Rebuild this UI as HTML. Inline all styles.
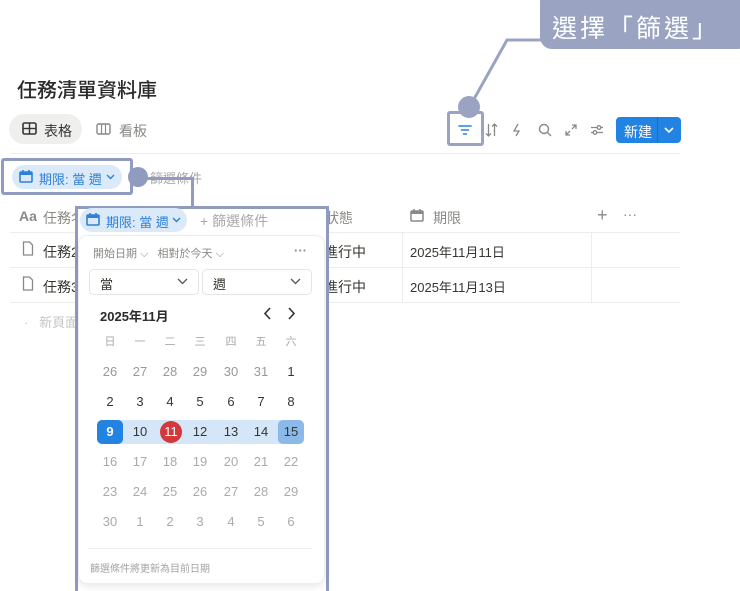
<!DOCTYPE html>
<html><head><meta charset="utf-8"><style>
*{margin:0;padding:0;box-sizing:border-box}
body{width:740px;height:591px;background:#fff;position:relative;overflow:hidden;font-family:"Liberation Sans","Noto Sans CJK TC",sans-serif;color:#37352f}
.a{position:absolute}
.t{white-space:nowrap}
.g{color:#8a8985}
.cal span{position:absolute;width:24px;text-align:center;font-size:13px;line-height:24px}
</style></head><body>

<div class="a t" style="left:17px;top:74px;font-size:20px;font-weight:500;color:#2b2b2b">任務清單資料庫</div>

<!-- tabs -->
<div class="a" style="left:9px;top:114px;width:73px;height:30px;border-radius:15px;background:#efefed"></div>
<svg class="a" style="left:22px;top:122px" width="15" height="13" viewBox="0 0 15 13"><rect x="1" y="1" width="13" height="11" rx="1.5" fill="none" stroke="#37352f" stroke-width="1.6"/><line x1="1" y1="6.5" x2="14" y2="6.5" stroke="#37352f" stroke-width="1.4"/><line x1="7.5" y1="1" x2="7.5" y2="12" stroke="#37352f" stroke-width="1.4"/></svg>
<div class="a t" style="left:44px;top:121px;font-size:14px">表格</div>
<svg class="a" style="left:96px;top:123px" width="15" height="12" viewBox="0 0 15 12"><rect x="1" y="1" width="13" height="10" rx="1.5" fill="none" stroke="#8a8985" stroke-width="1.4"/><line x1="5.5" y1="1" x2="5.5" y2="11" stroke="#8a8985" stroke-width="1.2"/><line x1="9.5" y1="1" x2="9.5" y2="11" stroke="#8a8985" stroke-width="1.2"/></svg>
<div class="a t g" style="left:119px;top:121px;font-size:14px">看板</div>

<!-- toolbar icons -->
<svg class="a" style="left:458px;top:124px" width="14" height="12"><g stroke="#2f80d8" stroke-width="1.6" stroke-linecap="round"><line x1="1" y1="2" x2="13" y2="2"/><line x1="3.5" y1="6" x2="10.5" y2="6"/><line x1="5.5" y1="10" x2="8.5" y2="10"/></g></svg>
<svg class="a" style="left:485px;top:123px" width="13" height="14" fill="none" stroke="#8a8985" stroke-width="1.3"><path d="M3.5 1v12M1 10.5l2.5 2.5 2.5-2.5M9.5 13V1M7 3.5L9.5 1 12 3.5"/></svg>
<svg class="a" style="left:512px;top:123px" width="10" height="14" fill="none" stroke="#8a8985" stroke-width="1.3"><path d="M6 1L2 8h5l-3 5"/></svg>
<svg class="a" style="left:538px;top:123px" width="14" height="14"><circle cx="6" cy="6" r="4.5" fill="none" stroke="#8a8985" stroke-width="1.4"/><line x1="9.5" y1="9.5" x2="13" y2="13" stroke="#8a8985" stroke-width="1.4"/></svg>
<svg class="a" style="left:565px;top:124px" width="12" height="12" fill="none" stroke="#8a8985" stroke-width="1.3"><path d="M1 11L5 7M1 7v4h4M11 1L7 5M7 1h4v4"/></svg>
<svg class="a" style="left:590px;top:124px" width="14" height="12" fill="none" stroke="#8a8985" stroke-width="1.3"><path d="M1 3.5h12M1 8.5h12"/><circle cx="9" cy="3.5" r="1.8" fill="#fff"/><circle cx="5" cy="8.5" r="1.8" fill="#fff"/></svg>
<div class="a" style="left:616px;top:117px;width:65px;height:26px;border-radius:4px;background:#2383e2"></div>
<div class="a t" style="left:624px;top:122px;color:#fff;font-size:14px">新建</div>
<div class="a" style="left:657px;top:117px;width:1px;height:26px;background:#1a6fc5"></div>
<svg class="a" style="left:664px;top:126px" width="10" height="8"><path d="M1 2l4 4 4-4" fill="none" stroke="#fff" stroke-width="1.6"/></svg>

<div class="a" style="left:10px;top:153px;width:670px;height:1px;background:#ededec"></div>

<!-- filter chip row -->
<div class="a" style="left:12px;top:165px;width:110px;height:24px;border-radius:12px;background:#dbeaf8"></div>
<svg class="a" style="left:19px;top:169px" width="14" height="14"><rect x="1" y="3" width="12" height="10" rx="1" fill="none" stroke="#2f80d8" stroke-width="1.6"/><rect x="1" y="3" width="12" height="3" fill="#2f80d8"/><line x1="4" y1="1" x2="4" y2="4" stroke="#2f80d8" stroke-width="1.6"/><line x1="10" y1="1" x2="10" y2="4" stroke="#2f80d8" stroke-width="1.6"/></svg>
<div class="a t" style="left:39px;top:169px;font-size:13px;color:#2f80d8">期限: 當 週</div>
<svg class="a" style="left:106px;top:174px" width="9" height="6"><path d="M1 1l3.5 3.5L8 1" fill="none" stroke="#2f80d8" stroke-width="1.4"/></svg>
<div class="a t g" style="left:150px;top:168px;font-size:13px;color:#aaa">篩選條件</div>

<!-- table -->
<div class="a t g" style="left:19px;top:208px;font-size:14px;font-weight:bold">Aa</div>
<div class="a t g" style="left:43px;top:208px;font-size:14px">任務名稱</div>
<div class="a t g" style="left:325px;top:208px;font-size:14px">狀態</div>
<svg class="a" style="left:410px;top:208px" width="14" height="14"><rect x="1" y="3" width="12" height="10" rx="1" fill="none" stroke="#8a8985" stroke-width="1.5"/><rect x="1" y="3" width="12" height="3" fill="#8a8985"/><line x1="4" y1="1" x2="4" y2="4" stroke="#8a8985" stroke-width="1.5"/><line x1="10" y1="1" x2="10" y2="4" stroke="#8a8985" stroke-width="1.5"/></svg>
<div class="a t g" style="left:433px;top:208px;font-size:14px">期限</div>
<div class="a t g" style="left:597px;top:205px;font-size:18px">+</div>
<div class="a t g" style="left:623px;top:206px;font-size:14px">···</div>
<div class="a" style="left:10px;top:232px;width:670px;height:1px;background:#ededec"></div>
<div class="a" style="left:10px;top:267px;width:670px;height:1px;background:#ededec"></div>
<div class="a" style="left:10px;top:302px;width:670px;height:1px;background:#ededec"></div>
<div class="a" style="left:402px;top:232px;width:1px;height:70px;background:#ededec"></div>
<div class="a" style="left:591px;top:232px;width:1px;height:70px;background:#ededec"></div>
<svg class="a" style="left:22px;top:241px" width="12" height="15"><path d="M1.5 1h6l3 3v10h-9z" fill="none" stroke="#8a8985" stroke-width="1.3"/></svg>
<svg class="a" style="left:22px;top:276px" width="12" height="15"><path d="M1.5 1h6l3 3v10h-9z" fill="none" stroke="#8a8985" stroke-width="1.3"/></svg>
<div class="a t" style="left:43px;top:242px;font-size:14px">任務2</div>
<div class="a t" style="left:43px;top:277px;font-size:14px">任務3</div>
<div class="a t" style="left:324px;top:242px;font-size:14px">進行中</div>
<div class="a t" style="left:324px;top:277px;font-size:14px">進行中</div>
<div class="a t" style="left:410px;top:242px;font-size:13px">2025年11月11日</div>
<div class="a t" style="left:410px;top:277px;font-size:13px">2025年11月13日</div>
<div class="a t g" style="left:24px;top:312px;font-size:13px;color:#c4c4c2">·&nbsp;&nbsp; 新頁面</div>

<!-- popup frame -->
<div class="a" style="left:75px;top:206px;width:254px;height:385px;background:#fff;border:3px solid #8f9bbf;border-bottom:none"></div>
<div class="a" style="left:80px;top:208px;width:107px;height:24px;border-radius:12px;background:#dbeaf8"></div>
<svg class="a" style="left:86px;top:212px" width="14" height="14"><rect x="1" y="3" width="12" height="10" rx="1" fill="none" stroke="#2f80d8" stroke-width="1.6"/><rect x="1" y="3" width="12" height="3" fill="#2f80d8"/><line x1="4" y1="1" x2="4" y2="4" stroke="#2f80d8" stroke-width="1.6"/><line x1="10" y1="1" x2="10" y2="4" stroke="#2f80d8" stroke-width="1.6"/></svg>
<div class="a t" style="left:106px;top:212px;font-size:13px;color:#2f80d8">期限: 當 週</div>
<svg class="a" style="left:172px;top:217px" width="9" height="6"><path d="M1 1l3.5 3.5L8 1" fill="none" stroke="#2f80d8" stroke-width="1.4"/></svg>
<div class="a t" style="left:200px;top:211px;font-size:14px;color:#aaa">+ 篩選條件</div>

<div class="a" style="left:79px;top:236px;width:245px;height:347px;border-radius:8px;background:#fff;box-shadow:0 0 0 1px #eeeeec,0 3px 8px rgba(0,0,0,.1)"></div>
<div class="a t g" style="left:93px;top:245px;font-size:11px">開始日期 ⌵ &nbsp; 相對於今天 ⌵</div>
<div class="a t g" style="left:294px;top:243px;font-size:13px;font-weight:bold">···</div>
<div class="a" style="left:89px;top:269px;width:110px;height:26px;border:1px solid #e4e4e2;border-radius:5px"></div>
<div class="a" style="left:202px;top:269px;width:110px;height:26px;border:1px solid #e4e4e2;border-radius:5px"></div>
<div class="a t" style="left:100px;top:274px;font-size:13px">當</div>
<div class="a t" style="left:213px;top:274px;font-size:13px">週</div>
<svg class="a" style="left:177px;top:278px" width="11" height="7"><path d="M1 1l4.5 4.5L10 1" fill="none" stroke="#555" stroke-width="1.3"/></svg>
<svg class="a" style="left:290px;top:278px" width="11" height="7"><path d="M1 1l4.5 4.5L10 1" fill="none" stroke="#555" stroke-width="1.3"/></svg>
<div class="a t" style="left:100px;top:306px;font-size:13px;font-weight:bold;color:#2b2b2b">2025年11月</div>
<svg class="a" style="left:262px;top:307px" width="36" height="13" fill="none" stroke="#333" stroke-width="1.6"><path d="M8 1L3 6.5 8 12M27 1l5 5.5L27 12"/></svg>

<div class="a" style="left:97px;top:420px;width:207px;height:24px;background:#d4e6f8;border-radius:5px"></div>
<div class="a" style="left:97px;top:420px;width:26px;height:24px;background:#2383e2;border-radius:5px"></div>
<div class="a" style="left:278px;top:420px;width:26px;height:24px;background:#8ab9ea;border-radius:5px"></div>
<div class="a" style="left:160px;top:421px;width:22px;height:22px;background:#d3383b;border-radius:50%"></div>

<div class="cal">
<span class="g" style="left:98px;top:330px;font-size:11px;color:#aaa">日</span><span style="left:128px;top:330px;font-size:11px;color:#aaa">一</span><span style="left:158px;top:330px;font-size:11px;color:#aaa">二</span><span style="left:188px;top:330px;font-size:11px;color:#aaa">三</span><span style="left:219px;top:330px;font-size:11px;color:#aaa">四</span><span style="left:249px;top:330px;font-size:11px;color:#aaa">五</span><span style="left:279px;top:330px;font-size:11px;color:#aaa">六</span>
<span style="left:98px;top:360px;color:#999">26</span><span style="left:128px;top:360px;color:#999">27</span><span style="left:158px;top:360px;color:#999">28</span><span style="left:188px;top:360px;color:#999">29</span><span style="left:219px;top:360px;color:#999">30</span><span style="left:249px;top:360px;color:#999">31</span><span style="left:279px;top:360px">1</span>
<span style="left:98px;top:390px">2</span><span style="left:128px;top:390px">3</span><span style="left:158px;top:390px">4</span><span style="left:188px;top:390px">5</span><span style="left:219px;top:390px">6</span><span style="left:249px;top:390px">7</span><span style="left:279px;top:390px">8</span>
<span style="left:98px;top:420px;color:#fff;font-weight:bold">9</span><span style="left:128px;top:420px">10</span><span style="left:159px;top:420px;color:#fff">11</span><span style="left:188px;top:420px">12</span><span style="left:219px;top:420px">13</span><span style="left:249px;top:420px">14</span><span style="left:279px;top:420px">15</span>
<span style="left:98px;top:450px;color:#aaa">16</span><span style="left:128px;top:450px;color:#aaa">17</span><span style="left:158px;top:450px;color:#aaa">18</span><span style="left:188px;top:450px;color:#aaa">19</span><span style="left:219px;top:450px;color:#aaa">20</span><span style="left:249px;top:450px;color:#aaa">21</span><span style="left:279px;top:450px;color:#aaa">22</span>
<span style="left:98px;top:480px;color:#aaa">23</span><span style="left:128px;top:480px;color:#aaa">24</span><span style="left:158px;top:480px;color:#aaa">25</span><span style="left:188px;top:480px;color:#aaa">26</span><span style="left:219px;top:480px;color:#aaa">27</span><span style="left:249px;top:480px;color:#aaa">28</span><span style="left:279px;top:480px;color:#aaa">29</span>
<span style="left:98px;top:510px;color:#aaa">30</span><span style="left:128px;top:510px;color:#aaa">1</span><span style="left:158px;top:510px;color:#aaa">2</span><span style="left:188px;top:510px;color:#aaa">3</span><span style="left:219px;top:510px;color:#aaa">4</span><span style="left:249px;top:510px;color:#aaa">5</span><span style="left:279px;top:510px;color:#aaa">6</span>
</div>
<div class="a" style="left:88px;top:548px;width:224px;height:1px;background:#ededec"></div>
<div class="a t" style="left:90px;top:560px;font-size:10px;color:#a3a3a0">篩選條件將更新為目前日期</div>

<!-- annotations -->
<div class="a" style="left:1px;top:158px;width:132px;height:37px;border:3px solid #8f9bbf;border-radius:3px"></div>
<div class="a" style="left:128px;top:167px;width:20px;height:20px;border-radius:50%;background:#8f9bbf"></div>
<div class="a" style="left:140px;top:177px;width:54px;height:3px;background:#8f9bbf"></div>
<div class="a" style="left:191px;top:177px;width:3px;height:30px;background:#8f9bbf"></div>

<div class="a" style="left:447px;top:111px;width:37px;height:35px;border:3px solid #9aa4c2;border-radius:3px"></div>
<svg class="a" style="left:455px;top:30px" width="120" height="90"><path d="M14 78L52 10H100" fill="none" stroke="#9aa4c2" stroke-width="3"/></svg>
<div class="a" style="left:458px;top:96px;width:22px;height:22px;border-radius:50%;background:#9aa4c2"></div>
<div class="a" style="left:540px;top:-10px;width:210px;height:59px;background:#9aa4c2;border-radius:12px"></div>
<div class="a t" style="left:552px;top:9px;font-size:25px;color:#fff;letter-spacing:3px">選擇「篩選」</div>
</body></html>
